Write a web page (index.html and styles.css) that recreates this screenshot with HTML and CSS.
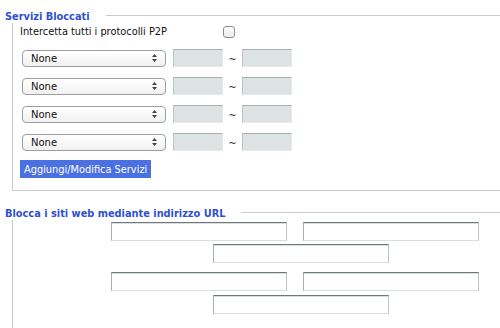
FILE: index.html
```html
<!DOCTYPE html>
<html>
<head>
<meta charset="utf-8">
<link rel="stylesheet" href="styles.css">
</head>
<body>
<div class="page">
  <div class="legend legend-first">
    <span class="legend-text">Servizi Bloccati</span>
    <span class="legend-line"></span>
  </div>
  <div class="box box-services">
    <div class="p2p-row">
      <span class="p2p-label">Intercetta tutti i protocolli P2P</span>
      <span class="checkbox"></span>
    </div>
    <div class="service-list">
      <div class="service-row">
        <div class="select"><span class="select-value">None</span><svg class="select-arrows" width="5" height="8" viewBox="0 0 5 8"><path d="M2.5 0 L5 3 L0 3 Z M0 5 L5 5 L2.5 8 Z" fill="#444"/></svg></div>
        <span class="port"></span><span class="tilde">~</span><span class="port"></span>
      </div>
      <div class="service-row">
        <div class="select"><span class="select-value">None</span><svg class="select-arrows" width="5" height="8" viewBox="0 0 5 8"><path d="M2.5 0 L5 3 L0 3 Z M0 5 L5 5 L2.5 8 Z" fill="#444"/></svg></div>
        <span class="port"></span><span class="tilde">~</span><span class="port"></span>
      </div>
      <div class="service-row">
        <div class="select"><span class="select-value">None</span><svg class="select-arrows" width="5" height="8" viewBox="0 0 5 8"><path d="M2.5 0 L5 3 L0 3 Z M0 5 L5 5 L2.5 8 Z" fill="#444"/></svg></div>
        <span class="port"></span><span class="tilde">~</span><span class="port"></span>
      </div>
      <div class="service-row">
        <div class="select"><span class="select-value">None</span><svg class="select-arrows" width="5" height="8" viewBox="0 0 5 8"><path d="M2.5 0 L5 3 L0 3 Z M0 5 L5 5 L2.5 8 Z" fill="#444"/></svg></div>
        <span class="port"></span><span class="tilde">~</span><span class="port"></span>
      </div>
    </div>
    <div class="button">Aggiungi/Modifica Servizi</div>
  </div>

  <div class="legend legend-second">
    <span class="legend-text">Blocca i siti web mediante indirizzo URL</span>
    <span class="legend-line"></span>
  </div>
  <div class="box box-urls">
    <div class="url-group">
      <div class="url-row url-row-pair"><span class="url-input"></span><span class="url-input"></span></div>
      <div class="url-row url-row-single"><span class="url-input"></span></div>
    </div>
    <div class="url-group">
      <div class="url-row url-row-pair"><span class="url-input"></span><span class="url-input"></span></div>
      <div class="url-row url-row-single"><span class="url-input"></span></div>
    </div>
  </div>
</div>
</body>
</html>
```

FILE: styles.css
```css
html, body {
  margin: 0;
  padding: 0;
  background: #ffffff;
  overflow: hidden;
}
body {
  width: 500px;
  height: 328px;
  font-family: "DejaVu Sans", Verdana, sans-serif;
  font-size: 9.8px;
  color: #111;
}
.page {
  padding-top: 8px;
  display: flex;
  flex-direction: column;
}
.legend {
  display: flex;
  align-items: center;
  height: 15px;
  padding-left: 5px;
}
.legend-text {
  font-weight: bold;
  font-size: 9.8px;
  color: #2f4fd0;
  white-space: nowrap;
  padding-top: 1px;
}
.legend-line {
  flex: 1;
  height: 1px;
  background: #c6cccc;
  margin-left: 16px;
}
.legend-second {
  margin-top: 14px;
}
.box {
  margin-left: 12px;
  border-left: 1px solid #c6cccc;
}
.box-services {
  border-bottom: 1px solid #c6cccc;
  padding-top: 2px;
  padding-bottom: 12px;
  display: flex;
  flex-direction: column;
}
.p2p-row {
  display: flex;
  align-items: center;
  height: 13px;
  padding-left: 7px;
}
.p2p-label {
  width: 203px;
  white-space: nowrap;
}
.checkbox {
  width: 10px;
  height: 10px;
  border: 1px solid #8e8e8e;
  border-radius: 3px;
  background: linear-gradient(#ffffff, #ececec);
}
.service-list {
  margin-top: 11px;
  display: flex;
  flex-direction: column;
  gap: 10px;
  padding-left: 9px;
}
.service-row {
  display: flex;
  align-items: center;
  height: 18px;
}
.select {
  box-sizing: border-box;
  width: 144px;
  height: 17px;
  border: 1px solid #9c9fa0;
  border-radius: 4px;
  background: linear-gradient(#ffffff, #f1f1f1);
  display: flex;
  align-items: center;
  justify-content: space-between;
  padding: 0 8px 0 8px;
}
.select-value {
  font-size: 10px;
  color: #111;
}
.select-arrows {
  display: block;
}
.port {
  box-sizing: border-box;
  width: 50px;
  height: 18px;
  background: #dde3e3;
  border: 1px solid;
  border-color: #a9b1b1 #e6eaea #e6eaea #bcc3c3;
}
.select + .port {
  margin-left: 7px;
}
.tilde {
  width: 19px;
  text-align: center;
  font-size: 10px;
  color: #333;
  padding-top: 3px;
}
.button {
  align-self: flex-start;
  margin-top: 9px;
  margin-left: 7px;
  height: 18px;
  padding: 0 4px 0 4px;
  background: #4b70e2;
  color: #ffffff;
  font-size: 9.8px;
  display: flex;
  align-items: center;
  white-space: nowrap;
}
.box-urls {
  padding-top: 2px;
  height: 120px;
  display: flex;
  flex-direction: column;
  gap: 9px;
}
.url-group {
  display: flex;
  flex-direction: column;
  gap: 3px;
}
.url-group + .url-group .url-row-single {
  margin-top: 1px;
}
.url-row {
  display: flex;
  height: 19px;
  gap: 16px;
}
.url-row-pair {
  padding-left: 98px;
}
.url-row-single {
  padding-left: 200px;
}
.url-input {
  box-sizing: border-box;
  width: 176px;
  height: 19px;
  background: #ffffff;
  border: 1px solid;
  border-color: #6e787d #bcc3c3 #d8dddd #a7afaf;
  box-shadow: inset 0 1px 0 #d9dfdf;
}
```
